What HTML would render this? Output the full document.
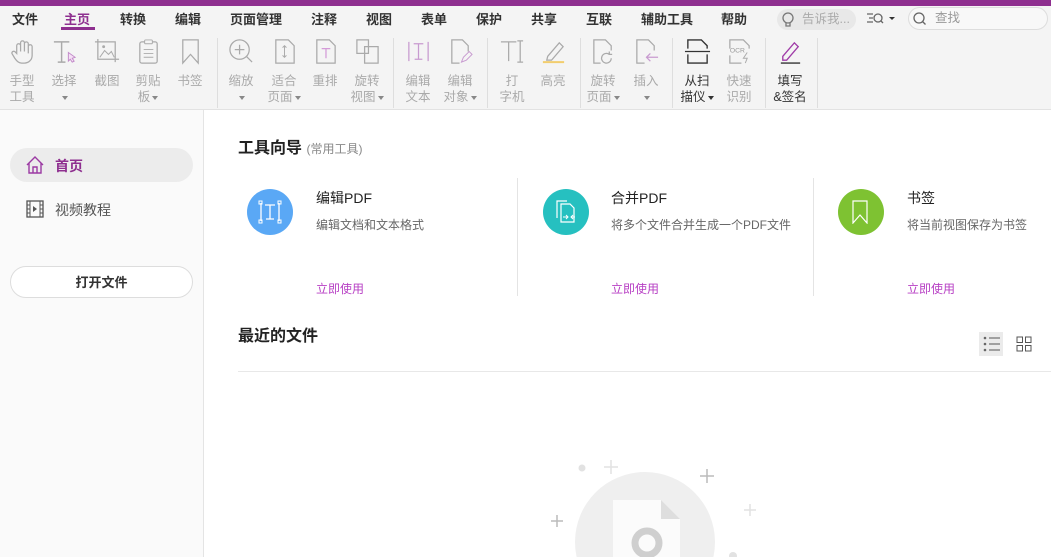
<!DOCTYPE html>
<html><head><meta charset="utf-8"><style>
*{margin:0;padding:0;box-sizing:border-box}
html,body{width:1051px;height:557px;overflow:hidden}
body{position:relative;background:#fff;font-family:"Liberation Sans","Noto Sans CJK SC",sans-serif}
.abs{position:absolute}
#top{left:0;top:0;width:1051px;height:6px;background:#8e2f8f}
#hdr{left:0;top:6px;width:1051px;height:104px;background:#f4f4f4;border-bottom:1px solid #e2e2e2}
.m{position:absolute;top:6px;font-size:13px;font-weight:bold;color:#333;line-height:16px}
.t{position:absolute;top:32px;width:44px;margin-left:-22px;text-align:center}
.t svg{display:block;margin:0 auto;width:27px;height:27px}
.t .l{font-size:12.5px;color:#aaa;line-height:16px;margin-top:8px}
.t.d .l{color:#333}
.sep{position:absolute;top:32px;width:1px;height:70px;background:#dedede}
.tri{display:inline-block;border-left:3px solid transparent;border-right:3px solid transparent;border-top:4px solid #888;vertical-align:middle;margin-left:2px}
#side{left:0;top:110px;width:204px;height:447px;background:#fafafa;border-right:1px solid #e4e4e4}
.card{position:absolute;top:178px;height:118px}
.circ{position:absolute;width:46px;height:46px;border-radius:50%}
.ct{position:absolute;font-size:14px;color:#222;top:10px}
.cd{position:absolute;font-size:12px;color:#666;top:38px;white-space:nowrap}
.cu{position:absolute;font-size:12px;color:#b73fc4;top:102px}
</style></head><body>
<div id="top" class="abs"></div>
<div id="hdr" class="abs">
<div class="m" style="left:12px">文件</div>
<div class="m" style="left:64px;color:#8e2f8f">主页</div>
<div class="abs" style="left:61px;top:21px;width:34px;height:3px;background:#8e2f8f"></div>
<div class="m" style="left:120px">转换</div>
<div class="m" style="left:175px">编辑</div>
<div class="m" style="left:230px">页面管理</div>
<div class="m" style="left:311px">注释</div>
<div class="m" style="left:366px">视图</div>
<div class="m" style="left:421px">表单</div>
<div class="m" style="left:476px">保护</div>
<div class="m" style="left:531px">共享</div>
<div class="m" style="left:586px">互联</div>
<div class="m" style="left:641px">辅助工具</div>
<div class="m" style="left:721px">帮助</div>
<div class="abs" style="left:777px;top:3px;width:79px;height:21px;border-radius:11px;background:#e8e8e8;font-size:12.5px;color:#aaa;line-height:21px;padding-left:25px">告诉我...</div>
<svg class="abs" style="left:780px;top:5px" width="16" height="17"><circle cx="8" cy="7" r="5" fill="none" stroke="#777" stroke-width="1.3"/><path d="M6 12v3h4v-3" fill="none" stroke="#777" stroke-width="1.3"/></svg>
<svg class="abs" style="left:866px;top:6px" width="30" height="14"><path d="M1 2h6M3 6h4M1 10h6" stroke="#666" stroke-width="1.2"/><circle cx="12" cy="6" r="4" fill="none" stroke="#666" stroke-width="1.3"/><path d="M15 9l2 2" stroke="#666" stroke-width="1.3"/><path d="M23 5h6l-3 3z" fill="#333"/></svg>
<div class="abs" style="left:908px;top:1px;width:140px;height:23px;border-radius:12px;border:1px solid #ddd;background:#f8f8f8;font-size:12.5px;color:#999;line-height:21px;padding-left:26px">查找</div>
<svg class="abs" style="left:912px;top:5px" width="15" height="15"><circle cx="7" cy="7" r="5" fill="none" stroke="#666" stroke-width="1.3"/><path d="M10.5 10.5l3 3" stroke="#666" stroke-width="1.3"/></svg>

<div class="t" style="left:22px"><svg viewBox="0 0 28 28"><path d="M8 16V8a2 2 0 014 0v6V5a2 2 0 014 0v9V6a2 2 0 014 0v10V9a2 2 0 014 0v9c0 5-4 8-8 8h-3c-3 0-5-2-7-5l-3-5a2 2 0 013-2z" fill="none" stroke="#aaa" stroke-width="1.3"/></svg><div class="l">手型<br>工具</div></div>
<div class="t" style="left:64px"><svg viewBox="0 0 28 28"><path d="M3 4h16M11 4v21M7 25h8" stroke="#aaa" stroke-width="1.5" fill="none"/><path d="M18 15l7 5-3 1 2 3-2 1-2-3-2 2z" fill="#f5e0f5" stroke="#c28ac9"/></svg><div class="l">选择<br><span class="tri"></span></div></div>
<div class="t" style="left:107px"><svg viewBox="0 0 28 28"><path d="M4 1v21h22M1 4h21v21" fill="none" stroke="#aaa" stroke-width="1.3"/><path d="M6 20l5-7 4 4 3-3 3 6" fill="none" stroke="#aaa"/><circle cx="10" cy="9" r="1.5" fill="#aaa"/></svg><div class="l">截图</div></div>
<div class="t" style="left:148px"><svg viewBox="0 0 28 28"><rect x="5" y="4" width="18" height="22" rx="2" fill="none" stroke="#aaa" stroke-width="1.3"/><rect x="10" y="2" width="8" height="4" rx="1" fill="#f4f4f4" stroke="#aaa"/><path d="M9 12h10M9 16h10M9 20h10" stroke="#aaa"/></svg><div class="l">剪贴<br>板<span class="tri"></span></div></div>
<div class="t" style="left:190px"><svg viewBox="0 0 28 28"><path d="M6 2h16v24l-8-9-8 9z" fill="none" stroke="#aaa" stroke-width="1.3"/></svg><div class="l">书签</div></div>
<div class="sep" style="left:217px"></div>
<div class="t" style="left:241px"><svg viewBox="0 0 28 28"><circle cx="12" cy="12" r="10" fill="none" stroke="#aaa" stroke-width="1.3"/><path d="M12 7v10M7 12h10M19 19l6 6" stroke="#aaa" stroke-width="1.3"/></svg><div class="l">缩放<br><span class="tri"></span></div></div>
<div class="t" style="left:284px"><svg viewBox="0 0 28 28"><path d="M5 2h13l6 6v18H5z" fill="none" stroke="#aaa" stroke-width="1.3"/><path d="M14 8v12M12 10l2-2 2 2M12 18l2 2 2-2" fill="none" stroke="#aaa"/></svg><div class="l">适合<br>页面<span class="tri"></span></div></div>
<div class="t" style="left:325px"><svg viewBox="0 0 28 28"><path d="M5 2h13l6 6v18H5z" fill="none" stroke="#aaa" stroke-width="1.3"/><path d="M10 11h9M14.5 11v10" stroke="#d49bd8" stroke-width="1.3"/></svg><div class="l">重排</div></div>
<div class="t" style="left:367px"><svg viewBox="0 0 28 28"><path d="M3 2h12v14H3zM11 9h14v17H11z" fill="#f4f4f4" stroke="#aaa" stroke-width="1.3"/></svg><div class="l">旋转<br>视图<span class="tri"></span></div></div>
<div class="sep" style="left:393px"></div>
<div class="t" style="left:418px"><svg viewBox="0 0 28 28"><path d="M4 4v20M24 4v20M9 6h10M14 6v16M10 22h8" stroke="#c89bd0" stroke-width="1.3" fill="none"/></svg><div class="l">编辑<br>文本</div></div>
<div class="t" style="left:460px"><svg viewBox="0 0 28 28"><path d="M13 26H5V2h11l6 6v6" fill="none" stroke="#aaa" stroke-width="1.3"/><path d="M15 25l2-5 6-6 3 3-6 6z" fill="none" stroke="#c89bd0"/></svg><div class="l">编辑<br>对象<span class="tri"></span></div></div>
<div class="sep" style="left:487px"></div>
<div class="t" style="left:512px"><svg viewBox="0 0 28 28"><path d="M2 4h16M10 4v20M22 3v22M19 3h6M19 25h6" stroke="#aaa" stroke-width="1.3" fill="none"/></svg><div class="l">打<br>字机</div></div>
<div class="t" style="left:553px"><svg viewBox="0 0 28 28"><path d="M8 19l12-14 4 4-12 14-5 0z" fill="none" stroke="#aaa" stroke-width="1.3"/><path d="M3 25h22" stroke="#f2cd6e" stroke-width="2"/></svg><div class="l">高亮</div></div>
<div class="sep" style="left:580px"></div>
<div class="t" style="left:603px"><svg viewBox="0 0 28 28"><path d="M11 26H4V2h12l6 6v5" fill="none" stroke="#aaa" stroke-width="1.3"/><path d="M22 21a5 5 0 11-2-4M20 14v3h3" fill="none" stroke="#aaa" stroke-width="1.3"/></svg><div class="l">旋转<br>页面<span class="tri"></span></div></div>
<div class="t" style="left:646px"><svg viewBox="0 0 28 28"><path d="M12 26H4V2h12l6 6v5" fill="none" stroke="#aaa" stroke-width="1.3"/><path d="M26 20H14M18 16l-4 4 4 4" fill="none" stroke="#c89bd0" stroke-width="1.3"/></svg><div class="l">插入<br><span class="tri"></span></div></div>
<div class="sep" style="left:672px"></div>
<div class="t d" style="left:697px"><svg viewBox="0 0 28 28"><path d="M4 11V2h14l6 6v3M4 17v9h20v-9M1 14h26" fill="none" stroke="#333" stroke-width="1.4"/></svg><div class="l">从扫<br>描仪<span class="tri" style="border-top-color:#333"></span></div></div>
<div class="t" style="left:739px"><svg viewBox="0 0 28 28"><path d="M4 11V2h14l6 6v3M4 18v8h12" fill="none" stroke="#aaa" stroke-width="1.3"/><text x="4" y="15" font-size="7" fill="#999" font-family="Liberation Sans">OCR</text><path d="M22 15l-4 6h4l-2 5" fill="none" stroke="#aaa"/></svg><div class="l">快速<br>识别</div></div>
<div class="sep" style="left:765px"></div>
<div class="t d" style="left:790px"><svg viewBox="0 0 28 28"><path d="M6 19L18 5l4 4L10 23H6z" fill="none" stroke="#a03ca8" stroke-width="1.4"/><path d="M4 26h20" stroke="#333" stroke-width="1.4"/></svg><div class="l">填写<br>&amp;签名</div></div>
<div class="sep" style="left:817px"></div>
</div>

<div id="side" class="abs">
<div class="abs" style="left:10px;top:38px;width:183px;height:34px;border-radius:17px;background:#ececec"></div>
<svg class="abs" style="left:25px;top:45px" width="20" height="20"><path d="M2 10L10 2l8 8M4 8v10h12V8M8 18v-6h4v6" fill="none" stroke="#9b3aa3" stroke-width="1.4"/></svg>
<div class="abs" style="left:55px;top:46px;font-size:14px;font-weight:bold;color:#8e2f8f">首页</div>
<svg class="abs" style="left:26px;top:90px" width="18" height="18"><rect x="1" y="1" width="16" height="16" fill="none" stroke="#555" stroke-width="1.3"/><path d="M4 1v16M14 1v16M1 5h3M1 9h3M1 13h3M14 5h3M14 9h3M14 13h3" stroke="#555"/><path d="M7 6l4 3-4 3z" fill="#555"/></svg>
<div class="abs" style="left:55px;top:90px;font-size:14px;color:#555">视频教程</div>
<div class="abs" style="left:10px;top:156px;width:183px;height:32px;border-radius:16px;border:1px solid #ddd;background:#fff;text-align:center;line-height:32px;font-size:13px;font-weight:bold;color:#333">打开文件</div>
</div>

<div class="abs" style="left:238px;top:134px;font-size:16px;font-weight:bold;color:#222">工具向导 <span style="font-size:12px;font-weight:normal;color:#888">(常用工具)</span></div>

<div class="card" style="left:238px;width:280px;border-right:1px solid #e4e4e4">
<div class="circ" style="left:9px;top:11px;background:#5aa8f5"></div>
<svg class="abs" style="left:18px;top:20px" width="28" height="28"><path d="M5 5v18M23 5v18M9 7h10M14 7v14M10 21h8" stroke="#fff" stroke-width="1.3" fill="none"/><rect x="3" y="3" width="3" height="3" fill="none" stroke="#fff"/><rect x="22" y="3" width="3" height="3" fill="none" stroke="#fff"/><rect x="3" y="22" width="3" height="3" fill="none" stroke="#fff"/><rect x="22" y="22" width="3" height="3" fill="none" stroke="#fff"/></svg>
<div class="ct" style="left:78px">编辑PDF</div><div class="cd" style="left:78px">编辑文档和文本格式</div><div class="cu" style="left:78px">立即使用</div>
</div>
<div class="card" style="left:533px;width:281px;border-right:1px solid #e4e4e4">
<div class="circ" style="left:10px;top:11px;background:#26c0c0"></div>
<svg class="abs" style="left:20px;top:20px" width="28" height="28"><path d="M4 20V3h10M8 24V6h9l4 4v14z" fill="none" stroke="#fff" stroke-width="1.2"/><path d="M10 19h5M13 17l2 2-2 2M22 19h-4M20 17l-2 2 2 2" fill="none" stroke="#fff"/></svg>
<div class="ct" style="left:78px">合并PDF</div><div class="cd" style="left:78px">将多个文件合并生成一个PDF文件</div><div class="cu" style="left:78px">立即使用</div>
</div>
<div class="card" style="left:829px;width:222px">
<div class="circ" style="left:9px;top:11px;background:#7ec232"></div>
<svg class="abs" style="left:22px;top:22px" width="20" height="24"><path d="M2 1h14v22l-7-8-7 8z" fill="none" stroke="#fff" stroke-width="1.2"/></svg>
<div class="ct" style="left:78px">书签</div><div class="cd" style="left:78px">将当前视图保存为书签</div><div class="cu" style="left:78px">立即使用</div>
</div>

<div class="abs" style="left:238px;top:322px;font-size:16px;font-weight:bold;color:#222">最近的文件</div>
<div class="abs" style="left:979px;top:332px;width:24px;height:24px;background:#ebebeb"></div>
<svg class="abs" style="left:983px;top:336px" width="18" height="16"><circle cx="2" cy="2" r="1.3" fill="#666"/><circle cx="2" cy="8" r="1.3" fill="#666"/><circle cx="2" cy="14" r="1.3" fill="#666"/><path d="M6 2h11M6 8h11M6 14h11" stroke="#555"/></svg>
<svg class="abs" style="left:1016px;top:336px" width="16" height="16"><rect x="1" y="1" width="5.5" height="5.5" fill="none" stroke="#555"/><rect x="9.5" y="1" width="5.5" height="5.5" fill="none" stroke="#555"/><rect x="1" y="9.5" width="5.5" height="5.5" fill="none" stroke="#555"/><rect x="9.5" y="9.5" width="5.5" height="5.5" fill="none" stroke="#555"/></svg>
<div class="abs" style="left:238px;top:371px;width:813px;height:1px;background:#e8e8e8"></div>

<svg class="abs" style="left:530px;top:440px" width="240" height="117">
<circle cx="115" cy="102" r="70" fill="#efefef"/>
<path d="M83 60h48l19 19v40H83z" fill="#fbfbfb"/>
<path d="M131 60v19h19z" fill="#dedede"/>
<circle cx="117" cy="103" r="12" fill="none" stroke="#cfcfcf" stroke-width="7"/>
<circle cx="52" cy="28" r="3.5" fill="#e2e2e2"/>
<path d="M81 20v14M74 27h14" stroke="#e2e2e2" stroke-width="1.5"/>
<path d="M177 29v14M170 36h14" stroke="#bbb" stroke-width="1.5"/>
<path d="M27 75v12M21 81h12" stroke="#bbb" stroke-width="1.5"/>
<path d="M220 64v12M214 70h12" stroke="#e2e2e2" stroke-width="1.5"/>
<circle cx="203" cy="116" r="4" fill="#e2e2e2"/>
</svg>
</body></html>
